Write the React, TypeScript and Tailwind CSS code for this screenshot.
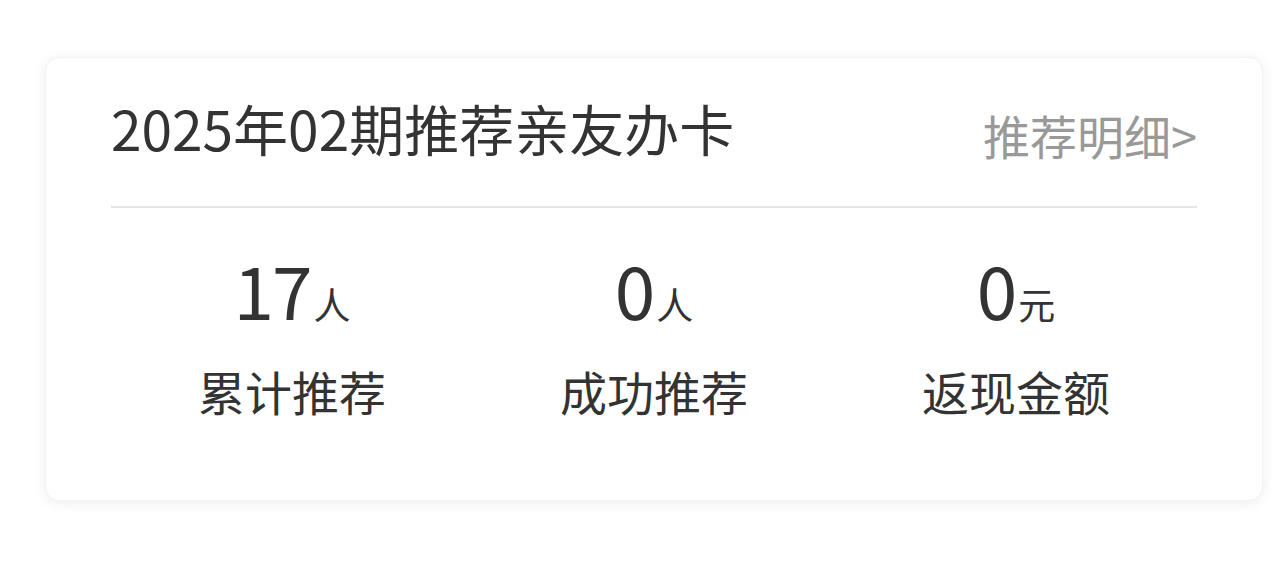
import React from "react";

const font = { fontFamily: '"Noto Sans CJK SC", "Noto Sans", sans-serif' };

function Stat({ value, unit, label }: { value: string; unit: string; label: string }) {
  return (
    <div className="flex flex-col items-center">
      <div className="flex items-baseline h-[92px]">
        <span className="text-[73px] leading-[92px] text-[#333333] tracking-[-2px]">{value}</span>
        <span className="text-[37px] leading-none text-[#333333] ml-[3px]">{unit}</span>
      </div>
      <div className="mt-[27px] text-[47px] leading-[60px] text-[#333333]">{label}</div>
    </div>
  );
}

export default function App() {
  return (
    <div className="w-[1280px] h-[565px] bg-white pt-[57px] pl-[45px]" style={font}>
      <div className="w-[1218px] h-[444px] rounded-[14px] bg-white px-[65px] shadow-[0_2px_14px_rgba(0,0,0,0.07)] border border-[#f3f3f3]">
        <div className="flex justify-between items-center h-[148px]">
          <div className="text-[55px] leading-none text-[#333333] -mt-[10px]">2025年02期推荐亲友办卡</div>
          <div className="text-[47px] leading-none text-[#999999] mt-[4px]">推荐明细&gt;</div>
        </div>
        <div className="h-[2px] bg-[#e6e6e6]" />
        <div className="grid grid-cols-3 pt-[34px]">
          <Stat value="17" unit="人" label="累计推荐" />
          <Stat value="0" unit="人" label="成功推荐" />
          <Stat value="0" unit="元" label="返现金额" />
        </div>
      </div>
    </div>
  );
}
